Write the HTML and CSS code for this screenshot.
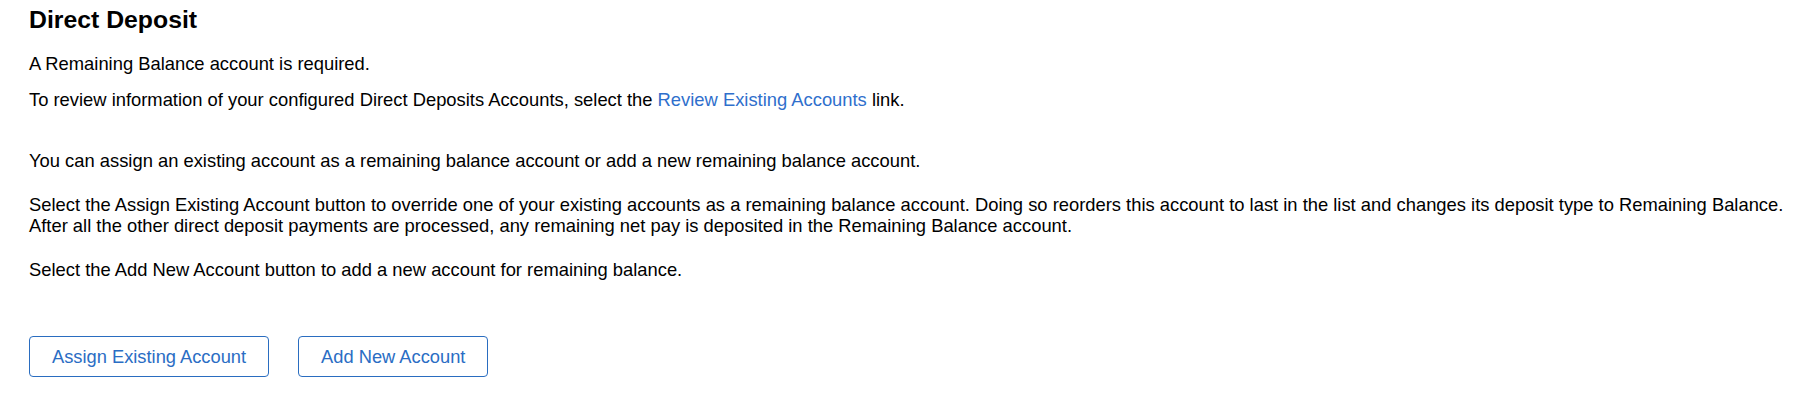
FILE: index.html
```html
<!DOCTYPE html>
<html lang="en">
<head>
<meta charset="utf-8">
<title>Direct Deposit</title>
<link rel="stylesheet" href="styles.css">
</head>
<body>
<main class="page">
  <h1 class="title">Direct Deposit</h1>
  <p class="intro">A Remaining Balance account is required.</p>
  <p class="intro review">To review information of your configured Direct Deposits Accounts, select the <a class="link" href="#">Review Existing Accounts</a> link.</p>
  <p class="info first">You can assign an existing account as a remaining balance account or add a new remaining balance account.</p>
  <p class="info">Select the Assign Existing Account button to override one of your existing accounts as a remaining balance account. Doing so reorders this account to last in the list and changes its deposit type to Remaining Balance.<br>After all the other direct deposit payments are processed, any remaining net pay is deposited in the Remaining Balance account.</p>
  <p class="info">Select the Add New Account button to add a new account for remaining balance.</p>
  <div class="actions">
    <button class="btn" type="button">Assign Existing Account</button>
    <button class="btn" type="button">Add New Account</button>
  </div>
</main>
</body>
</html>
```

FILE: styles.css
```css
html, body {
  margin: 0;
  padding: 0;
  background: #ffffff;
}

body {
  font-family: "Liberation Sans", Arial, sans-serif;
  color: #000000;
}

.page {
  padding: 6px 0 0 29px;
}

.title {
  margin: 0;
  font-size: 24.8px;
  font-weight: bold;
  line-height: 28px;
}

.intro,
.info {
  margin: 0;
  font-size: 18.36px;
  line-height: 21.7px;
  white-space: nowrap;
}

.intro {
  margin-top: 18.5px;
}

.review {
  margin-top: 14.3px;
}

.info {
  margin-top: 22px;
}

.info.first {
  margin-top: 39.6px;
}

.link {
  color: #2f6fcc;
  text-decoration: none;
}

.actions {
  display: flex;
  gap: 29px;
  margin-top: 55px;
}

.btn {
  font-family: "Liberation Sans", Arial, sans-serif;
  font-size: 18.3px;
  line-height: 21px;
  color: #2a6dc4;
  background: #ffffff;
  border: 1px solid #2a6dc0;
  border-radius: 4px;
  padding: 9px 22px;
  height: 41px;
  box-sizing: border-box;
  cursor: pointer;
}
```
